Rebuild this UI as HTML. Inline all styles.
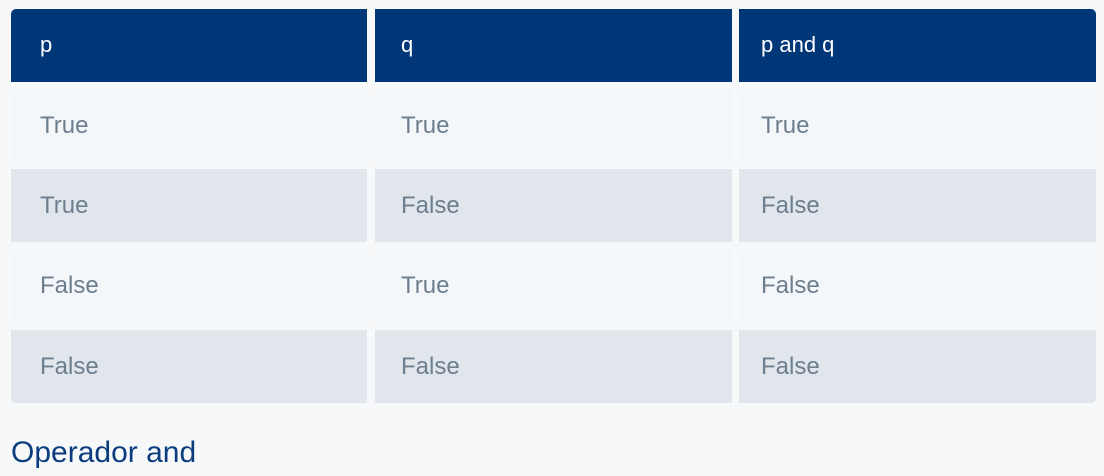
<!DOCTYPE html>
<html><head><style>
body{margin:0;width:1104px;height:476px;background:#f6f8fa;font-family:"Liberation Sans",sans-serif;position:relative;overflow:hidden}
.c{position:absolute;box-sizing:border-box;display:flex;align-items:center;font-size:24px;color:#6d7e8e}
.h{background:#003779;color:#fff;font-size:22px;padding-bottom:2px}
.a{background:#f4f7f9}
.b{background:#e0e6ec}
.c1{left:11px;width:356px;padding-left:29px}
.c2{left:375px;width:357px;padding-left:26px}
.c3{left:739px;width:357px;padding-left:22px}
.cap{position:absolute;left:11px;top:433px;font-size:30px;color:#0b3d7e;line-height:40px}
</style></head><body>
<div class="c h c1" style="top:9px;height:73px;border-top-left-radius:5px">p</div>
<div class="c h c2" style="top:9px;height:73px">q</div>
<div class="c h c3" style="top:9px;height:73px;border-top-right-radius:5px">p and q</div>

<div class="c a c1" style="top:89px;height:73px">True</div>
<div class="c a c2" style="top:89px;height:73px">True</div>
<div class="c a c3" style="top:89px;height:73px">True</div>

<div class="c b c1" style="top:169px;height:73px">True</div>
<div class="c b c2" style="top:169px;height:73px">False</div>
<div class="c b c3" style="top:169px;height:73px">False</div>

<div class="c a c1" style="top:249px;height:73px">False</div>
<div class="c a c2" style="top:249px;height:73px">True</div>
<div class="c a c3" style="top:249px;height:73px">False</div>

<div class="c b c1" style="top:330px;height:73px;border-bottom-left-radius:5px">False</div>
<div class="c b c2" style="top:330px;height:73px">False</div>
<div class="c b c3" style="top:330px;height:73px;border-bottom-right-radius:5px">False</div>

<div class="cap">Operador and</div>
</body></html>
